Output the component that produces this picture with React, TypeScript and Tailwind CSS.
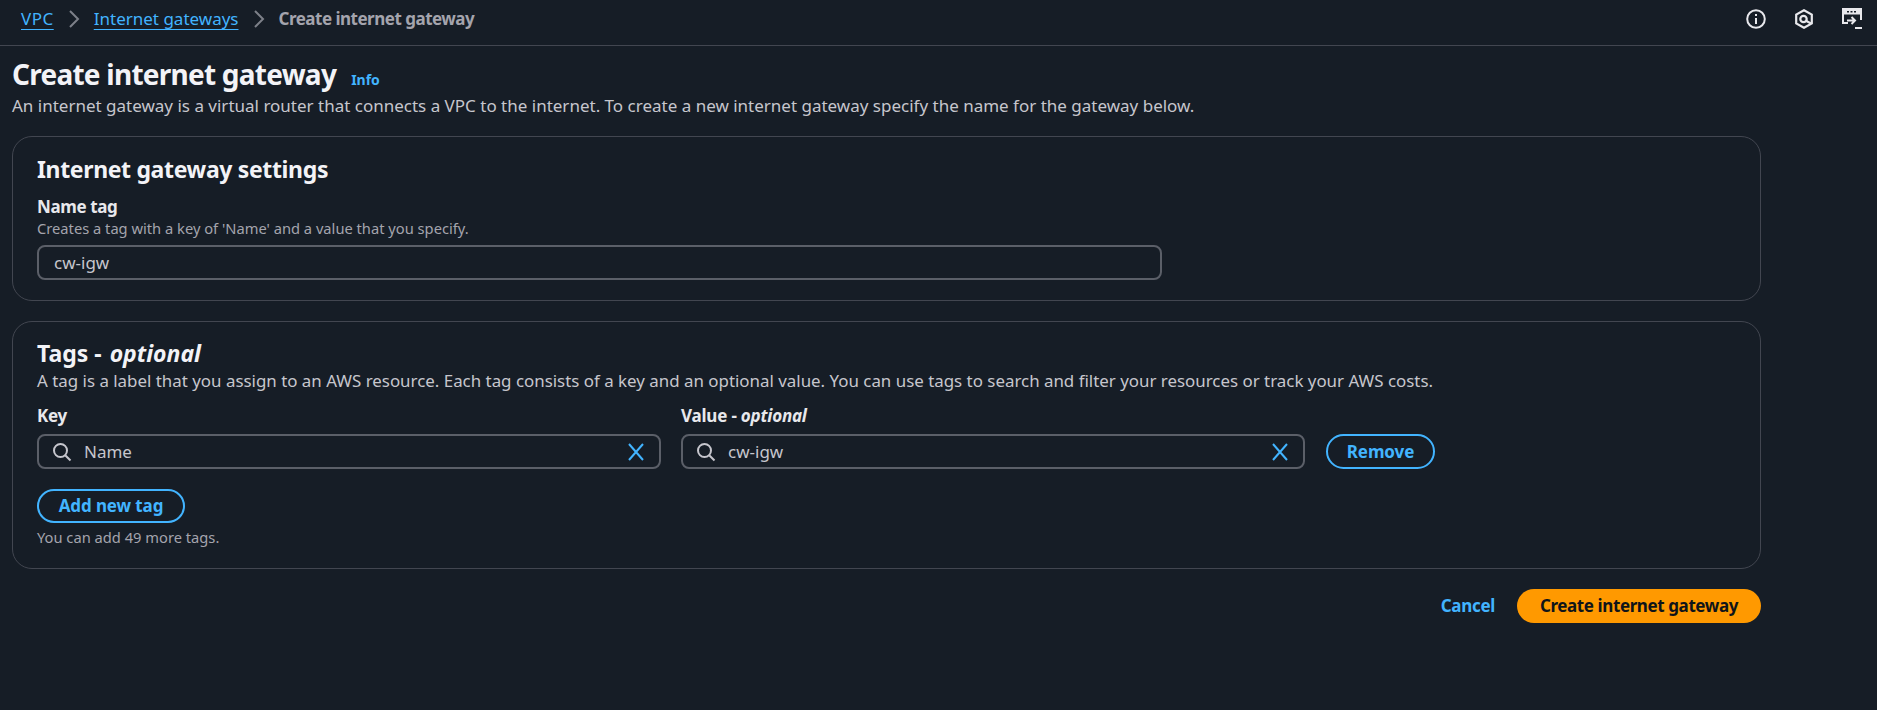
const font = { fontFamily: '"Noto Sans", sans-serif' };

function SearchIcon() {
  return (
    <svg viewBox="0 0 20 20" className="w-5 h-5 shrink-0 text-[#c6c6cd]" fill="none" stroke="currentColor" strokeWidth="2">
      <circle cx="8.500" cy="8.500" r="6.500" />
      <path d="M13.200 13.200 18.500 18.500" />
    </svg>
  );
}

function ClearIcon() {
  return (
    <svg viewBox="0 0 20 20" className="w-5 h-5 shrink-0 text-[#42b4ff]" fill="none" stroke="currentColor" strokeWidth="2">
      <path d="M3 2 17 18M17 2 3 18" />
    </svg>
  );
}

function Chevron() {
  return (
    <svg viewBox="0 0 12 20" className="w-3 h-5 mx-[14px] text-[#7d8089]" fill="none" stroke="currentColor" strokeWidth="2">
      <path d="M2 2 10 10 2 18" />
    </svg>
  );
}

function TagInput({ value }: { value: string }) {
  return (
    <div className="flex items-center w-full h-[35px] pl-[13px] pr-[13px] rounded-lg border-2 border-[#5b5f68]">
      <SearchIcon />
      <span className="ml-[12px] flex-1 text-[17px] text-[#c6c6cd]">{value}</span>
      <ClearIcon />
    </div>
  );
}

export default function App() {
  return (
    <div className="w-[1877px] h-[710px] overflow-hidden bg-[#161d26] text-[#c6c6cd]" style={font}>
      <header className="h-[46px] flex items-center justify-between border-b border-[#424650] pl-[21px] pr-[15px] pb-[7px]">
        <nav className="flex items-center text-[17px]">
          <a className="text-[#42b4ff] underline underline-offset-4 tracking-[0.5px]">VPC</a>
          <Chevron />
          <a className="text-[#42b4ff] underline underline-offset-4">Internet gateways</a>
          <Chevron />
          <span className="font-bold text-[#a4a4ad] tracking-[-0.5px]">Create internet gateway</span>
        </nav>
        <div className="flex items-center gap-[29px] text-[#e8e8ec]">
          <svg viewBox="0 0 20 20" className="w-5 h-5" fill="none" stroke="currentColor" strokeWidth="2">
            <circle cx="10" cy="10" r="8.800" />
            <path d="M10 9v6M10 5v2" />
          </svg>
          <svg viewBox="0 0 18 20" className="w-[18px] h-5" fill="none" stroke="currentColor" strokeWidth="2.200">
            <path d="M9 1.200 16.800 5.600v8.800L9 18.800 1.200 14.400V5.600Z" />
            <circle cx="8.500" cy="10" r="3.200" />
            <path d="M10.500 11.500 16 14.500" />
          </svg>
          <svg viewBox="0 0 20 22" className="w-5 h-[22px]" fill="none" stroke="currentColor" strokeWidth="2">
            <path d="M6 15H1V1h18v11" />
            <path d="M1 2h18v4H1z" fill="currentColor" strokeWidth="1" />
            <path d="M5 3.800h2M8.500 3.800h2M12 3.800h2" stroke="#161d26" strokeWidth="1.500" />
            <path d="M5 12.500h8M9.500 9 13 12.500 9.500 16" />
            <path d="M13 20h7" />
          </svg>
        </div>
      </header>

      <main className="w-[1761px] pl-3">
        <div className="flex items-baseline mt-[10px]">
          <h1 className="text-[28px] leading-[36px] font-bold tracking-[-0.75px] text-[#f3f3f7]">Create internet gateway</h1>
          <a className="ml-[15px] text-[14px] font-bold text-[#42b4ff]">Info</a>
        </div>
        <p className="mt-[2px] text-[17px] leading-6 text-[#c6c6cd]">
          An internet gateway is a virtual router that connects a VPC to the internet. To create a new internet gateway specify the name for the gateway below.
        </p>

        <section className="mt-[18px] h-[165px] rounded-[20px] border border-[#424650] px-[24px] pt-[16px]">
          <h2 className="text-[23px] leading-8 font-bold tracking-[-0.35px] text-[#f3f3f7]">Internet gateway settings</h2>
          <div className="mt-[10px] text-[17px] leading-6 font-bold tracking-[-0.4px] text-[#e8e8ec]">Name tag</div>
          <div className="text-[14.7px] leading-[18px] text-[#a4a4ad]">Creates a tag with a key of 'Name' and a value that you specify.</div>
          <div className="mt-[8px] w-[1125px] h-[35px] flex items-center px-[15px] rounded-lg border-2 border-[#5b5f68] text-[17px] text-[#c6c6cd]">cw-igw</div>
        </section>

        <section className="mt-[20px] h-[248px] rounded-[20px] border border-[#424650] px-[24px] pt-[15px]">
          <h2 className="text-[23px] leading-8 font-bold text-[#f3f3f7]">
            Tags - <i className="ml-[2px]">optional</i>
          </h2>
          <p className="text-[16.9px] leading-6 text-[#c6c6cd]">
            A tag is a label that you assign to an AWS resource. Each tag consists of a key and an optional value. You can use tags to search and filter your resources or track your AWS costs.
          </p>
          <div className="mt-[11px] flex items-end">
            <div className="w-[624px]">
              <div className="text-[17px] leading-6 font-bold tracking-[-0.3px] text-[#e8e8ec] mb-[6px]">Key</div>
              <TagInput value="Name" />
            </div>
            <div className="w-[624px] ml-[20px]">
              <div className="text-[17px] leading-6 font-bold tracking-[-0.2px] text-[#e8e8ec] mb-[6px]">
                Value - <i>optional</i>
              </div>
              <TagInput value="cw-igw" />
            </div>
            <button className="ml-[21px] w-[109px] h-[35px] rounded-full border-2 border-[#42b4ff] text-[17px] font-bold tracking-[-0.1px] text-[#42b4ff]">Remove</button>
          </div>
          <button className="block mt-[20px] w-[148px] h-[34px] rounded-full border-2 border-[#42b4ff] text-[17px] font-bold tracking-[-0.1px] text-[#42b4ff]">Add new tag</button>
          <div className="mt-[5px] text-[14.7px] leading-[18px] text-[#a4a4ad]">You can add 49 more tags.</div>
        </section>

        <div className="mt-[20px] flex items-center justify-end">
          <a className="text-[17px] font-bold tracking-[-0.3px] text-[#42b4ff]">Cancel</a>
          <button className="ml-[22px] w-[244px] h-[34px] rounded-full bg-[#ff9900] text-[17px] font-bold tracking-[-0.4px] text-[#0f141a]">Create internet gateway</button>
        </div>
      </main>
    </div>
  );
}
